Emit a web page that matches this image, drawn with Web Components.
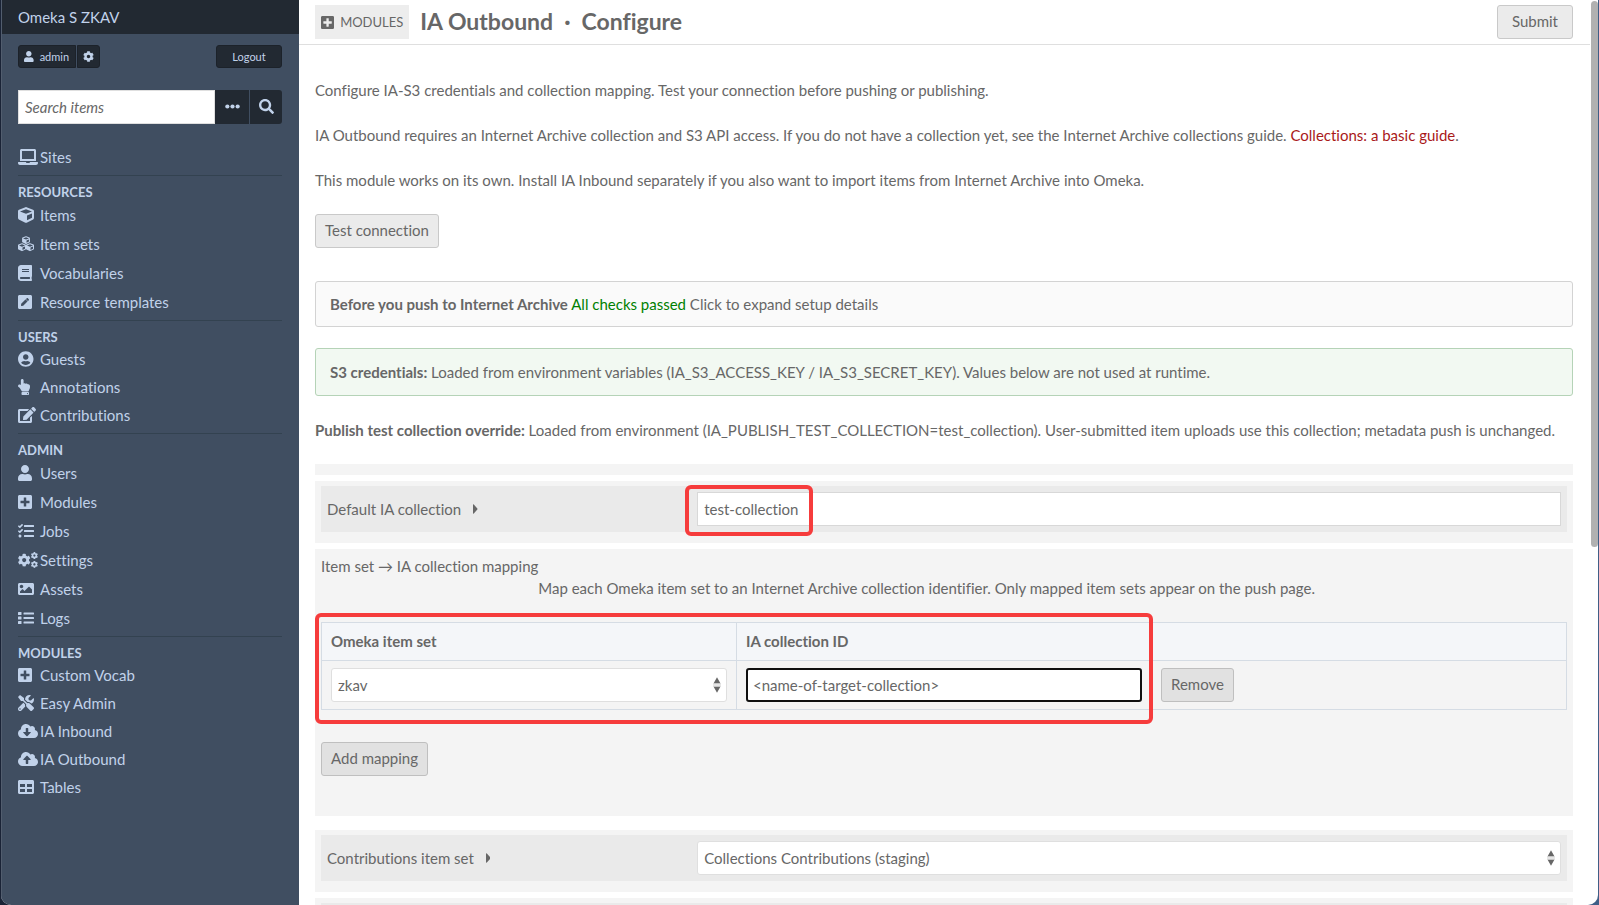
<!DOCTYPE html>
<html lang="en">
<head>
<meta charset="utf-8">
<meta name="viewport" content="width=device-width, initial-scale=1">
<title>IA Outbound · Configure · Omeka S ZKAV</title>
<style>
  html { height: 100%; }
  body {
    margin: 0;
    min-height: 100%;
    background: linear-gradient(90deg, #1a2336, #3f5f87);
    color: #676767;
    font: 15px/22px Lato, "Noto Sans", sans-serif;
    font-variant-ligatures: no-common-ligatures;
    overflow: hidden;
  }
</style>
</head>
<body>
<admin-shell>
  <side-bar slot="side" site="Omeka S ZKAV" user="admin">
    <nav-section compact>
      <nav-link icon="laptop">Sites</nav-link>
    </nav-section>
    <nav-section heading="Resources">
      <nav-link icon="cube">Items</nav-link>
      <nav-link icon="cubes">Item sets</nav-link>
      <nav-link icon="book">Vocabularies</nav-link>
      <nav-link icon="pen-square">Resource templates</nav-link>
    </nav-section>
    <nav-section heading="Users" compact>
      <nav-link icon="user-circle">Guests</nav-link>
      <nav-link icon="hand">Annotations</nav-link>
      <nav-link icon="edit">Contributions</nav-link>
    </nav-section>
    <nav-section heading="Admin">
      <nav-link icon="user">Users</nav-link>
      <nav-link icon="plus-square">Modules</nav-link>
      <nav-link icon="tasks">Jobs</nav-link>
      <nav-link icon="cogs">Settings</nav-link>
      <nav-link icon="image">Assets</nav-link>
      <nav-link icon="list">Logs</nav-link>
    </nav-section>
    <nav-section heading="Modules" compact last>
      <nav-link icon="plus-square">Custom Vocab</nav-link>
      <nav-link icon="tools">Easy Admin</nav-link>
      <nav-link icon="cloud-down">IA Inbound</nav-link>
      <nav-link icon="cloud-up">IA Outbound</nav-link>
      <nav-link icon="table">Tables</nav-link>
    </nav-section>
  </side-bar>

  <page-header slot="header" section="Modules" name="IA Outbound" action="Configure"></page-header>

  <module-intro></module-intro>

  <note-box>
    <strong>Before you push to Internet Archive</strong>
    <span style="color:#008000">All checks passed</span>
    Click to expand setup details
  </note-box>
  <note-box kind="success"><strong>S3 credentials:</strong> Loaded from environment variables (IA_S3_ACCESS_KEY / IA_S3_SECRET_KEY). Values below are not used at runtime.</note-box>

  <config-form></config-form>
</admin-shell>

<script>
const ICONS = {
  'user': [448, '<path d="M224 256c70.7 0 128-57.3 128-128S294.7 0 224 0 96 57.3 96 128s57.3 128 128 128zm89.6 32h-16.7c-22.2 10.2-46.9 16-72.9 16s-50.6-5.8-72.9-16h-16.7C60.2 288 0 348.2 0 422.4V464c0 26.5 21.5 48 48 48h352c26.5 0 48-21.5 48-48v-41.6c0-74.2-60.2-134.4-134.4-134.4z"/>'],
  'ellipsis': [512, '<circle cx="80" cy="256" r="72"/><circle cx="256" cy="256" r="72"/><circle cx="432" cy="256" r="72"/>'],
  'search': [512, '<path d="M505 442.7L405.3 343c-4.5-4.5-10.6-7-17-7H372c27.6-35.3 44-79.7 44-128C416 93.1 322.9 0 208 0S0 93.1 0 208s93.1 208 208 208c48.3 0 92.7-16.4 128-44v16.3c0 6.4 2.5 12.5 7 17l99.7 99.7c9.4 9.4 24.6 9.4 33.9 0l28.3-28.3c9.4-9.4 9.4-24.6.1-34zM208 336c-70.7 0-128-57.2-128-128 0-70.7 57.2-128 128-128 70.7 0 128 57.2 128 128 0 70.7-57.2 128-128 128z"/>'],
  'laptop': [640, '<path d="M624 416H381.5c-.7 19.8-14.7 32-32.7 32H288c-18.7 0-33-17.5-32.8-32H16c-8.8 0-16 7.2-16 16v16c0 35.2 28.8 64 64 64h512c35.2 0 64-28.8 64-64v-16c0-8.8-7.2-16-16-16zM576 48c0-26.400-21.600-48-48-48H112C85.600 0 64 21.600 64 48v336h512V48zm-64 272H128V64h384v256z"/>'],
  'book': [448, '<path d="M448 360V24c0-13.300-10.700-24-24-24H96C43 0 0 43 0 96v320c0 53 43 96 96 96h328c13.300 0 24-10.700 24-24v-16c0-7.500-3.500-14.300-8.900-18.700-4.200-15.400-4.200-59.300 0-74.700 5.400-4.300 8.900-11.100 8.900-18.600zM128 134c0-3.300 2.700-6 6-6h212c3.300 0 6 2.700 6 6v20c0 3.300-2.700 6-6 6H134c-3.300 0-6-2.700-6-6v-20zm0 64c0-3.300 2.700-6 6-6h212c3.300 0 6 2.700 6 6v20c0 3.300-2.700 6-6 6H134c-3.300 0-6-2.700-6-6v-20zm253.400 250H96c-17.700 0-32-14.300-32-32 0-17.600 14.400-32 32-32h285.400c-1.900 17.100-1.900 46.900 0 64z"/>'],
  'pen-square': [448, '<path d="M400 480H48c-26.500 0-48-21.500-48-48V80c0-26.500 21.500-48 48-48h352c26.500 0 48 21.500 48 48v352c0 26.500-21.500 48-48 48zM238.100 177.900L102.400 313.600l-6.300 57.100c-.8 7.600 5.600 14.100 13.300 13.300l57.100-6.300L302.200 242c2.300-2.300 2.300-6.100 0-8.500L246.700 178c-2.500-2.400-6.300-2.400-8.600-.1zM345 165.100L314.900 135c-9.400-9.400-24.600-9.400-33.900 0l-23.100 23.100c-2.300 2.300-2.300 6.100 0 8.500l55.500 55.500c2.300 2.300 6.100 2.300 8.500 0L345 199c9.300-9.300 9.300-24.500 0-33.900z"/>'],
  'user-circle': [496, '<path d="M248 8C111 8 0 119 0 256s111 248 248 248 248-111 248-248S385 8 248 8zm0 96c48.600 0 88 39.400 88 88s-39.400 88-88 88-88-39.400-88-88 39.400-88 88-88zm0 344c-58.700 0-111.300-26.600-146.500-68.200 18.800-35.400 55.600-59.800 98.500-59.800 2.400 0 4.800.4 7.100 1.100 13 4.200 26.600 6.900 40.900 6.900 14.300 0 28-2.700 40.900-6.900 2.300-.7 4.700-1.100 7.100-1.100 42.900 0 79.700 24.400 98.500 59.800C359.300 421.400 306.700 448 248 448z"/>'],
  'hand': [384, '<path d="M135.700 0c23.600 0 43.800 20.600 43.800 44.800v99.900c17-16.400 49.700-18.400 70.900 6.300 22.800-14.300 53-2.200 62.300 16.400C361.900 158.400 384 189.300 384 240c0 2.700-.2 13.300-.2 16 .2 62-31 76.900-38.300 123.700C343.700 391.400 333.600 400 321.800 400H150.300c-18.400 0-35.900-10.600-43.900-28.500C93.400 342.600 57.400 276.100 29.100 264 10.900 256.200 0 242.600 0 224c0-34.200 35.100-57.800 66.900-44.100 8.400 3.600 16.700 8.300 24.900 14.100V44.800C91.800 21.400 112.400 0 135.700 0zM136 416h192c13.300 0 24 10.700 24 24v48c0 13.300-10.700 24-24 24H136c-13.300 0-24-10.700-24-24v-48c0-13.300 10.700-24 24-24zm168 28c-11 0-20 9-20 20s9 20 20 20 20-9 20-20-9-20-20-20z"/>'],
  'edit': [576, '<path d="M402.600 83.200l90.200 90.200c3.800 3.800 3.800 10 0 13.800L274.400 405.600l-92.800 10.300c-12.400 1.400-22.900-9.100-21.500-21.500l10.300-92.800L388.800 83.200c3.800-3.800 10-3.800 13.800 0zm162-22.900l-48.800-48.800c-15.200-15.200-39.900-15.200-55.200 0l-35.400 35.400c-3.800 3.800-3.800 10 0 13.800l90.200 90.200c3.800 3.800 10 3.800 13.800 0l35.400-35.400c15.200-15.300 15.200-40 0-55.200zM384 346.200V448H64V128h229.800c3.200 0 6.200-1.300 8.500-3.500l40-40c7.600-7.600 2.200-20.500-8.500-20.500H48C21.500 64 0 85.500 0 112v352c0 26.500 21.500 48 48 48h352c26.500 0 48-21.500 48-48V306.200c0-10.700-12.900-16-20.500-8.500l-40 40c-2.200 2.300-3.500 5.300-3.500 8.500z"/>'],
  'plus-square': [448, '<path d="M400 32H48C21.500 32 0 53.500 0 80v352c0 26.500 21.500 48 48 48h352c26.500 0 48-21.500 48-48V80c0-26.500-21.500-48-48-48zm-32 252c0 6.600-5.400 12-12 12h-92v92c0 6.600-5.400 12-12 12h-56c-6.600 0-12-5.400-12-12v-92H92c-6.600 0-12-5.400-12-12v-56c0-6.600 5.400-12 12-12h92v-92c0-6.600 5.400-12 12-12h56c6.600 0 12 5.400 12 12v92h92c6.600 0 12 5.400 12 12v56z"/>'],
  'tasks': [512, '<path d="M139.600 35.500a12 12 0 0 0-17 0L58.900 98.800l-22.700-22.100a12 12 0 0 0-17 0L3.500 92.400a12 12 0 0 0 0 17l47.600 47.400a12.800 12.800 0 0 0 17.600 0l15.600-15.600L156.500 69a12 12 0 0 0 .1-17zm0 159.200a12 12 0 0 0-17 0l-63.700 63.700-22.700-22.100a12 12 0 0 0-17 0L3.500 252a12 12 0 0 0 0 17L51 316.500a12.800 12.800 0 0 0 17.600 0l15.700-15.700 72.200-72.200a12 12 0 0 0 .1-16.900zM64 368c-26.500 0-48.600 21.500-48.600 48s22.100 48 48.600 48a48 48 0 0 0 0-96zm432 16H208a16 16 0 0 0-16 16v32a16 16 0 0 0 16 16h288a16 16 0 0 0 16-16v-32a16 16 0 0 0-16-16zm0-320H208a16 16 0 0 0-16 16v32a16 16 0 0 0 16 16h288a16 16 0 0 0 16-16V80a16 16 0 0 0-16-16zm0 160H208a16 16 0 0 0-16 16v32a16 16 0 0 0 16 16h288a16 16 0 0 0 16-16v-32a16 16 0 0 0-16-16z"/>'],
  'image': [512, '<path d="M464 448H48c-26.500 0-48-21.500-48-48V112c0-26.500 21.500-48 48-48h416c26.500 0 48 21.500 48 48v288c0 26.500-21.500 48-48 48zM112 120c-30.900 0-56 25.100-56 56s25.100 56 56 56 56-25.100 56-56-25.100-56-56-56zM64 384h384V272l-87.500-87.500c-4.700-4.700-12.300-4.700-17 0L208 320l-55.500-55.500c-4.700-4.700-12.300-4.700-17 0L64 336v48z"/>'],
  'list': [512, '<rect y="64" width="112" height="96" rx="16"/><rect y="208" width="112" height="96" rx="16"/><rect y="352" width="112" height="96" rx="16"/><rect x="176" y="80" width="336" height="64" rx="16"/><rect x="176" y="224" width="336" height="64" rx="16"/><rect x="176" y="368" width="336" height="64" rx="16"/>'],
  'tools': [512, '<path d="M501.100 395.700L384 278.600c-23.100-23.100-57.600-27.600-85.400-13.900L192 158.100V96L64 0 0 64l96 128h62.100l106.600 106.600c-13.600 27.800-9.200 62.300 13.900 85.400l117.100 117.100c14.600 14.600 38.200 14.600 52.700 0l52.700-52.700c14.500-14.600 14.500-38.200 0-52.700zM331.700 225c28.300 0 54.900 11 74.900 31l19.400 19.400c15.800-6.900 30.800-16.500 43.800-29.500 37.100-37.100 49.700-89.300 37.900-136.700-2.200-9-13.500-12.100-20.100-5.500l-74.400 74.400-67.900-11.300L334 98.900l74.400-74.400c6.600-6.600 3.400-17.900-5.700-20.200-47.400-11.700-99.600.9-136.600 37.900-28.500 28.500-41.900 66.100-41.200 103.600l82.100 82.100c8.100-1.900 16.500-2.900 24.700-2.900zm-103.900 82l-56.700-56.700L18.700 402.800c-25 25-25 65.500 0 90.500s65.500 25 90.500 0l123.600-123.600c-7.600-19.900-9.900-41.600-5-62.700zM64 472c-13.200 0-24-10.800-24-24 0-13.300 10.700-24 24-24s24 10.700 24 24c0 13.200-10.700 24-24 24z"/>'],
  'table': [512, '<path d="M464 32H48C21.500 32 0 53.500 0 80v352c0 26.500 21.500 48 48 48h416c26.500 0 48-21.500 48-48V80c0-26.500-21.500-48-48-48zM224 416H64v-96h160v96zm0-160H64v-96h160v96zm224 160H288v-96h160v96zm0-160H288v-96h160v96z"/>'],
  'sort': [256, '<path d="M128 10L236 200H20zM128 502L236 312H20z"/><path d="M0 210H256V242H0zM0 270H256V302H0z" opacity=".35"/>'],
  'caret': [192, '<path d="M0 76v360c0 22 22 30 36 16l148-174c10-12 10-32 0-44L36 60C22 46 0 54 0 76z"/>'],
};
const COG = '<path d="M487.400 315.700l-42.600-24.600c4.300-23.200 4.300-47 0-70.200l42.600-24.600c4.900-2.800 7.100-8.600 5.500-14-11.100-35.600-30-67.800-54.700-94.600-3.800-4.100-10-5.100-14.800-2.300L380.800 110c-17.900-15.400-38.500-27.300-60.800-35.100V25.800c0-5.600-3.900-10.500-9.400-11.700-36.700-8.200-74.300-7.800-109.200 0-5.500 1.200-9.400 6.100-9.400 11.700V75c-22.200 7.900-42.800 19.800-60.800 35.100L88.700 85.500c-4.900-2.800-11-1.900-14.800 2.300-24.700 26.700-43.600 58.900-54.700 94.600-1.700 5.400.6 11.200 5.500 14L67.300 221c-4.300 23.200-4.300 47 0 70.200l-42.600 24.600c-4.900 2.800-7.100 8.600-5.500 14 11.100 35.600 30 67.800 54.700 94.600 3.800 4.100 10 5.100 14.800 2.300l42.600-24.600c17.900 15.400 38.500 27.300 60.800 35.100v49.200c0 5.600 3.900 10.500 9.400 11.700 36.700 8.200 74.300 7.800 109.200 0 5.500-1.200 9.400-6.100 9.400-11.700v-49.200c22.200-7.900 42.800-19.800 60.800-35.100l42.600 24.600c4.900 2.800 11 1.900 14.800-2.300 24.700-26.700 43.600-58.900 54.700-94.600 1.500-5.500-.7-11.300-5.600-14.100zM256 336c-44.100 0-80-35.900-80-80s35.900-80 80-80 80 35.900 80 80-35.900 80-80 80z"/>';
const CUBE = '<path d="M239.100 6.300l-208 78c-18.700 7-31.100 25-31.100 45v225.100c0 18.200 10.300 34.800 26.500 42.900l208 104c13.500 6.800 29.400 6.800 42.900 0l208-104c16.300-8.100 26.500-24.800 26.500-42.900V129.300c0-20-12.400-37.900-31.100-44.900l-208-78C262 2.200 250 2.200 239.100 6.300zM256 68.400l192 72v1.100l-192 78-192-78v-1.100l192-72zm32 356V275.500l160-65v133.900l-160 80z"/>';
const CLOUD = 'M537.600 226.600c4.100-10.700 6.400-22.400 6.400-34.600 0-53-43-96-96-96-19.700 0-38.100 6-53.300 16.200C367 64.200 315.300 32 256 32c-88.400 0-160 71.600-160 160 0 2.700.1 5.400.2 8.100C40.200 219.800 0 273.200 0 336c0 79.500 64.500 144 144 144h368c70.700 0 128-57.300 128-128 0-61.900-44-113.600-102.400-125.400z';
ICONS.cog = [512, COG];
ICONS.cogs = [640, `<g transform="translate(-12 50) scale(.82)">${COG}</g><g transform="translate(410 0) scale(.45)">${COG}</g><g transform="translate(410 282) scale(.45)">${COG}</g>`];
ICONS.cube = [512, CUBE];
ICONS.cubes = [512, `<g transform="translate(131 8) scale(.49)">${CUBE}</g><g transform="translate(0 232) scale(.5)">${CUBE}</g><g transform="translate(256 232) scale(.5)">${CUBE}</g>`];
ICONS['cloud-down'] = [640, `<path d="${CLOUD}m-132.900 88.700L299.300 420.700c-6.200 6.200-16.400 6.200-22.600 0L171.300 315.300c-10.100-10.100-2.900-27.300 11.300-27.300H248V176c0-8.800 7.200-16 16-16h48c8.800 0 16 7.200 16 16v112h65.400c14.200 0 21.400 17.200 11.300 27.300z"/>`];
ICONS['cloud-up'] = [640, `<path d="${CLOUD}M393.400 288H328v112c0 8.800-7.200 16-16 16h-48c-8.800 0-16-7.200-16-16V288h-65.400c-14.300 0-21.400-17.200-11.300-27.400l105.400-105.400c6.200-6.200 16.400-6.200 22.600 0l105.400 105.400c10.100 10.200 2.900 27.400-11.300 27.400z"/>`];

const define = (name, render) => customElements.define(name, class extends HTMLElement {
  connectedCallback() {
    if (this.shadowRoot) return;
    this.attachShadow({ mode: 'open' }).innerHTML = render(this);
  }
});
const attr = (el, name) => el.getAttribute(name) || '';

/* Single-colour glyph; --size is its height, the width follows the viewBox. */
define('ui-icon', el => {
  const [w, body] = ICONS[attr(el, 'name')];
  return `<style>
    :host { display: inline-flex; }
    svg { display: block; height: var(--size, 16px); fill: currentColor; fill-rule: evenodd; }
  </style><svg viewBox="0 0 ${w} 512" aria-hidden="true">${body}</svg>`;
});

define('admin-shell', () => `<style>
  :host {
    display: grid;
    grid-template-columns: 298px minmax(0, 1fr) 8px;
    height: 100vh;
    margin: 0 1px;
    box-sizing: border-box;
    overflow: hidden;
    background: #fff;
    border-radius: 0 0 10px 10px;
  }
  main { display: flex; flex-direction: column; min-width: 0; overflow: hidden; }
  .content { padding: 34px 17px 0 16px; flex: none; }
  .track { padding: 1px 0 0 1px; }
  .thumb { height: 60.4%; border-radius: 4px; background: #b1b1b1; }
</style>
<slot name="side"></slot>
<main><slot name="header"></slot><div class="content"><slot></slot></div></main>
<div class="track"><div class="thumb"></div></div>`);

define('side-bar', el => `<style>
  :host { display: block; background: #404e61; color: #c1d2ea; border-left: 1px solid #525d6e; box-sizing: border-box; }
  header { height: 34px; box-sizing: border-box; padding: 6px 16px; background: #222932; font-size: 15px; }
  a { color: inherit; text-decoration: none; }
  .body { padding: 11px 17px 0 16px; }
  .user { display: flex; gap: 1px; font-size: 11px; line-height: 18px; --size: 11px; }
  .user a, .user button, .search button {
    display: flex; align-items: center; justify-content: center;
    box-sizing: border-box; height: 23px;
    border: 1px solid #1c222a; background: #222932; color: inherit; font: inherit;
  }
  .user .me { gap: 6px; padding: 0 6px 0 5px; border-radius: 3px 0 0 3px; }
  .user .gear { padding: 0 5px; border-radius: 0 3px 3px 0; }
  .user .out { margin-left: auto; width: 66px; padding: 0; border-radius: 3px; }
  .search { display: flex; margin: 22px 0 19px; }
  .search input {
    flex: 1; min-width: 0; box-sizing: border-box; height: 34px; padding: 0 6px;
    border: 1px solid #dfdfdf; border-radius: 0; background: #fff; color: #676767; font: inherit;
  }
  .search input::placeholder { color: #676767; font-style: italic; opacity: 1; }
  .search button { width: 34px; height: 34px; padding: 0 0 2px; border: 0; --size: 15px; }
  .search button + button { width: 33px; border-left: 1px solid #404e61; border-radius: 0 3px 3px 0; }
</style>
<header><a href="#">${attr(el, 'site')}</a></header>
<div class="body">
  <div class="user">
    <a class="me" href="#"><ui-icon name="user"></ui-icon>${attr(el, 'user')}</a>
    <a class="gear" href="#" aria-label="User settings"><ui-icon name="cog"></ui-icon></a>
    <button class="out" type="button">Logout</button>
  </div>
  <form class="search" onsubmit="return false">
    <input type="text" placeholder="Search items" aria-label="Search items">
    <button type="button" aria-label="Advanced search"><ui-icon name="ellipsis"></ui-icon></button>
    <button type="submit" aria-label="Search"><ui-icon name="search"></ui-icon></button>
  </form>
  <nav><slot></slot></nav>
</div>`);

define('nav-section', el => `<style>
  :host { display: block; padding-bottom: 4px; border-bottom: 1px solid #334250; --row: 29px; }
  :host([compact]) { --row: 28px; }
  :host([last]) { border-bottom: 0; }
  h4 { margin: 0; height: 24px; line-height: 32px; font-size: 13px; font-weight: 700; text-transform: uppercase; }
</style>${attr(el, 'heading') ? `<h4>${attr(el, 'heading')}</h4>` : ''}<slot></slot>`);

define('nav-link', el => `<style>
  :host { display: block; }
  a { display: grid; grid-template-columns: 22px 1fr; align-items: center; height: var(--row); color: inherit; text-decoration: none; }
</style><a href="#"><ui-icon name="${attr(el, 'icon')}"></ui-icon><span><slot></slot></span></a>`);

/* Push button; tone="deep" is the darker variant used on grey panels. */
define('ui-button', () => `<style>
  :host { display: inline-block; vertical-align: top; }
  button {
    display: block; box-sizing: border-box; height: 34px; padding: 0 var(--pad, 9px) 2px;
    border: 1px solid #c9c9c9; border-radius: 3px; background: #ebebeb; color: #676767; font: inherit;
  }
  :host([tone="deep"]) button { background: #e1e1e1; border-color: #bfbfbf; }
</style><button type="button"><slot></slot></button>`);

define('page-header', el => `<style>
  :host { display: flex; align-items: center; flex: none; box-sizing: border-box; height: 45px; padding: 0 17px 0 16px; border-bottom: 1px solid #dfdfdf; }
  .tag { display: flex; align-items: center; gap: 6px; height: 34px; padding: 0 6px; background: #ededed; color: inherit; font-size: 13px; text-decoration: none; text-transform: uppercase; --size: 15px; }
  h1 { display: flex; gap: 11px; margin: 0 auto 0 11px; font-size: 23px; line-height: 32px; padding-bottom: 2px; font-weight: 700; }
  ui-button { --pad: 14px; }
</style>
<a class="tag" href="#"><ui-icon name="plus-square"></ui-icon>${attr(el, 'section')}</a>
<h1><span>${attr(el, 'name')}</span><span>·</span><span>${attr(el, 'action')}</span></h1>
<ui-button>Submit</ui-button>`);

define('module-intro', () => `<style>
  :host { display: block; margin-bottom: 33px; }
  p { margin: 0 0 23px; }
  a { color: #a91919; text-decoration: none; }
</style>
<p>Configure IA-S3 credentials and collection mapping. Test your connection before pushing or publishing.</p>
<p>IA Outbound requires an Internet Archive collection and S3 API access. If you do not have a collection yet, see the Internet Archive collections guide. <a href="#">Collections: a basic guide</a>.</p>
<p>This module works on its own. Install IA Inbound separately if you also want to import items from Internet Archive into Omeka.</p>
<ui-button>Test connection</ui-button>`);

define('note-box', () => `<style>
  :host { display: block; margin-bottom: 21px; padding: 11px 14px; border: 1px solid #d3d3d3; border-radius: 3px; background: #fafafa; }
  :host([kind="success"]) { margin-bottom: 23px; padding: 12px 14px; border-color: #b5d3b7; background: #f2f9f2; }
</style><slot></slot>`);

define('select-box', el => `<style>
  :host { display: grid; align-items: center; }
  select, ui-icon { grid-area: 1 / 1; }
  select {
    appearance: none; box-sizing: border-box; width: 100%; height: 34px; padding: 0 24px 0 6px;
    border: 1px solid #dfdfdf; border-radius: 3px; background: #fff; color: #676767; font: inherit;
  }
  ui-icon { justify-self: end; margin-right: 6px; pointer-events: none; --size: 16px; }
</style><select aria-label="${attr(el, 'label')}"><option>${attr(el, 'value')}</option></select><ui-icon name="sort"></ui-icon>`);

/* Red outline laid over the thing it points at. */
define('call-out', () => `<style>
  :host { position: absolute; box-sizing: border-box; border: 4px solid #f63c3c; border-radius: 6px; pointer-events: none; }
</style>`);

define('field-row', el => `<style>
  :host { display: block; padding: 5px 6px 11px; background: #f4f4f4; }
  .inner { display: grid; grid-template-columns: 3fr 7fr; align-items: center; min-height: 34px; padding: 6px; background: #eaeaea; }
  .name { display: flex; align-items: center; gap: 12px; }
  .name button { display: flex; padding: 0; border: 0; background: none; color: inherit; --size: 12px; }
  .control { position: relative; }
  input { display: block; box-sizing: border-box; width: 100%; height: 34px; padding: 0 6px; border: 1px solid #d8d8d8; border-radius: 0; background: #fff; color: #676767; font: inherit; }
  call-out { left: -12px; top: -7px; width: 128px; height: 51px; }
</style>
<div class="inner">${attr(el, 'label') ? `
  <div class="name"><label for="f">${attr(el, 'label')}</label><button type="button" aria-label="Show description"><ui-icon name="caret"></ui-icon></button></div>
  <div class="control">${attr(el, 'type') === 'select'
    ? `<select-box id="f" label="${attr(el, 'label')}" value="${attr(el, 'value')}"></select-box>`
    : `<input id="f" type="text" value="${attr(el, 'value')}">`}${el.hasAttribute('marked') ? '<call-out></call-out>' : ''}</div>` : ''}
</div>`);

define('mapping-panel', () => `<style>
  :host { display: block; padding: 6px 6px 40px; background: #f4f4f4; }
  .intro { display: grid; grid-template-columns: auto 1fr; margin-bottom: 23px; }
  .intro h3 { margin: 0; font: inherit; }
  .intro p { grid-area: 2 / 2; margin: 0; }
  .sheet { position: relative; margin-bottom: 32px; }
  table { width: 100%; table-layout: fixed; border-collapse: collapse; }
  tr { border: 1px solid #d5dce4; }
  th, td { padding: 7px 9px; text-align: left; }
  th { padding-bottom: 8px; background: #f4f6f9; }
  th + th, td + td { border-left: 1px solid #d5dce4; }
  input { display: block; box-sizing: border-box; width: 100%; height: 34px; padding: 0 5px; border: 2px solid #101010; border-radius: 3px; background: #fff; color: #676767; font: inherit; outline: 0; }
  call-out { left: -6px; top: -9px; width: calc(66.67% + 7px); height: 111px; }
</style>
<div class="intro">
  <h3>Item set → IA collection mapping</h3>
  <p>Map each Omeka item set to an Internet Archive collection identifier. Only mapped item sets appear on the push page.</p>
</div>
<div class="sheet">
  <table>
    <thead><tr><th>Omeka item set</th><th>IA collection ID</th><th></th></tr></thead>
    <tbody><tr>
      <td><select-box label="Omeka item set" value="zkav"></select-box></td>
      <td><input type="text" aria-label="IA collection ID" value="&lt;name-of-target-collection&gt;"></td>
      <td><ui-button tone="deep">Remove</ui-button></td>
    </tr></tbody>
  </table>
  <call-out></call-out>
</div>
<ui-button tone="deep">Add mapping</ui-button>`);

define('config-form', () => `<style>
  :host { display: block; }
  p { margin: 0 0 23px; }
  .spacer { height: 11px; background: #f4f4f4; }
  form { display: grid; gap: 6px; }
  mapping-panel { margin-bottom: 8px; }
</style>
<p><strong>Publish test collection override:</strong> Loaded from environment (IA_PUBLISH_TEST_COLLECTION=test_collection). User-submitted item uploads use this collection; metadata push is unchanged.</p>
<form onsubmit="return false">
  <div class="spacer"></div>
  <field-row label="Default IA collection" value="test-collection" marked></field-row>
  <mapping-panel></mapping-panel>
  <field-row label="Contributions item set" type="select" value="Collections Contributions (staging)"></field-row>
  <field-row></field-row>
</form>`);
</script>
</body>
</html>
